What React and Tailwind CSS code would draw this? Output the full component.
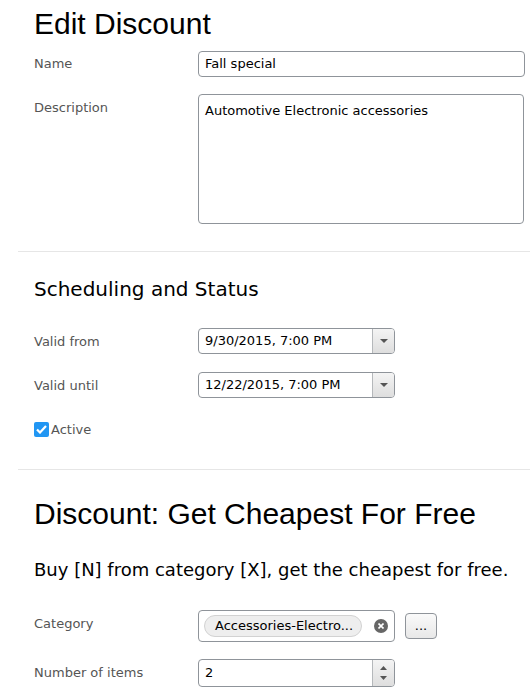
import React from "react";

const label = "text-[13px] text-[#555] font-['DejaVu_Sans',sans-serif]";
const inputText = "text-[13px] text-black font-['DejaVu_Sans',sans-serif]";

function Row({ name, children, className = "", labelClass = "" }) {
  return (
    <div className={`flex ${className}`}>
      <div className={`w-[164px] shrink-0 ${label} ${labelClass}`}>{name}</div>
      {children}
    </div>
  );
}

function DateBox({ value }) {
  return (
    <div className="flex h-[26px] w-[197px] rounded-[4px] border border-[#8f949a] overflow-hidden">
      <div className={`flex-1 flex items-center pl-[6px] ${inputText}`}>{value}</div>
      <div className="w-[22px] flex items-center justify-center border-l border-[#b5b8bb] bg-gradient-to-b from-[#f4f4f4] to-[#dedede]">
        <svg width="8" height="4" viewBox="0 0 8 4"><path d="M0 0h8L4 4z" fill="#555" /></svg>
      </div>
    </div>
  );
}

export default function App() {
  return (
    <div className="w-[530px] bg-white pl-[18px] pb-[8px]">
      <div className="pl-[16px]">
        <h1 className="pt-[6px] text-[30px] leading-[36px] text-black font-['Liberation_Sans',sans-serif]">Edit Discount</h1>
        <Row name="Name" className="mt-[9px] items-start" labelClass="pt-[3px]">
          <div className={`h-[26px] w-[327px] rounded-[4px] border border-[#8f949a] flex items-center pl-[6px] ${inputText}`}>Fall special</div>
        </Row>
        <Row name="Description" className="mt-[17px] items-start" labelClass="pt-[4px]">
          <div className={`h-[130px] w-[326px] rounded-[4px] border border-[#8f949a] pl-[6px] pt-[6px] ${inputText} text-[#333]`}>Automotive Electronic accessories</div>
        </Row>
      </div>
      <div className="mt-[27px] h-px bg-[#e6e6e6]" />
      <div className="pl-[16px]">
        <h2 className="mt-[24px] text-[20px] leading-[26px] text-black font-['DejaVu_Sans',sans-serif]">Scheduling and Status</h2>
        <Row name="Valid from" className="mt-[26px] items-center" labelClass="pt-[1px]">
          <DateBox value="9/30/2015, 7:00 PM" />
        </Row>
        <Row name="Valid until" className="mt-[18px] items-center" labelClass="pt-[1px]">
          <DateBox value="12/22/2015, 7:00 PM" />
        </Row>
        <div className="mt-[22px] flex items-center gap-[2px]">
          <div className="w-[15px] h-[15px] rounded-[2px] bg-[#2196f3] flex items-center justify-center">
            <svg width="11" height="9" viewBox="0 0 11 9"><path d="M1 4.5l3 3L10 1" stroke="white" strokeWidth="2.2" fill="none" /></svg>
          </div>
          <span className={label}>Active</span>
        </div>
      </div>
      <div className="mt-[29px] h-px bg-[#e6e6e6]" />
      <div className="pl-[16px]">
        <h1 className="mt-[26px] text-[30px] leading-[36px] text-black font-['Liberation_Sans',sans-serif]">Discount: Get Cheapest For Free</h1>
        <p className="mt-[26px] text-[18px] leading-[24px] text-black font-['DejaVu_Sans',sans-serif]">Buy [N] from category [X], get the cheapest for free.</p>
        <Row name="Category" className="mt-[28px] items-start" labelClass="pt-[4px]">
          <div className="flex items-center gap-[10px]">
            <div className="h-[32px] w-[197px] rounded-[4px] border border-[#8f949a] flex items-center pl-[5px] pr-[6px]">
              <div className={`h-[22px] w-[158px] rounded-full border border-[#d2d2d2] bg-[#eeeeee] flex items-center pl-[10px] ${inputText} text-[#333]`}>Accessories-Electro...</div>
              <div className="ml-auto w-[14px] h-[14px] rounded-full bg-[#666] flex items-center justify-center">
                <svg width="6" height="6" viewBox="0 0 6 6"><path d="M0.5 0.5l5 5M5.5 0.5l-5 5" stroke="white" strokeWidth="1.6" /></svg>
              </div>
            </div>
            <div className={`h-[26px] w-[32px] rounded-[4px] border border-[#8f949a] bg-gradient-to-b from-[#fafafa] to-[#e8e8e8] flex items-center justify-center ${inputText} text-[#333] leading-none`}>...</div>
          </div>
        </Row>
        <Row name="Number of items" className="mt-[17px] items-center">
          <div className="flex h-[28px] w-[197px] rounded-[4px] border border-[#8f949a] overflow-hidden">
            <div className={`flex-1 flex items-center pl-[6px] ${inputText}`}>2</div>
            <div className="w-[22px] flex flex-col items-center justify-center gap-[6px] border-l border-[#b5b8bb] bg-gradient-to-b from-[#f4f4f4] to-[#dedede]">
              <svg width="7" height="4" viewBox="0 0 7 4"><path d="M0 4h7L3.5 0z" fill="#555" /></svg>
              <svg width="7" height="4" viewBox="0 0 7 4"><path d="M0 0h7L3.5 4z" fill="#555" /></svg>
            </div>
          </div>
        </Row>
      </div>
    </div>
  );
}
